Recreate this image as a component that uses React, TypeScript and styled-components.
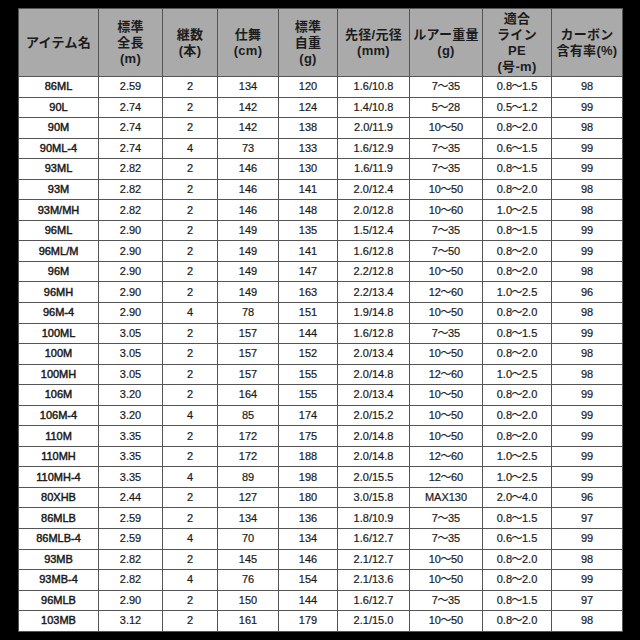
import React from 'react';
import styled, { createGlobalStyle } from 'styled-components';

const GlobalStyle = createGlobalStyle`
  html, body {
    margin: 0;
    padding: 0;
    background: #000;
  }
  body {
    font-family: "Liberation Sans", "Noto Sans CJK JP", sans-serif;
  }
`;

const Frame = styled.div`
  width: 640px;
  height: 640px;
  box-sizing: border-box;
  padding: 8px 18px 9px 18px;
  background: #000;
`;

const SpecTable = styled.table`
  width: 604px;
  height: 623px;
  table-layout: fixed;
  border-collapse: collapse;
  background: #fff;
`;

const HeadRow = styled.tr`
  height: 68px;
`;

const HeadCell = styled.th`
  background: #aaaaaa;
  border: 1px solid #555;
  padding: 0;
  font-family: "Liberation Sans", "Noto Sans CJK JP", sans-serif;
  font-size: 13px;
  font-weight: 700;
  line-height: 16px;
  color: #1c1c1c;
  text-align: center;
  vertical-align: middle;
  white-space: nowrap;
  letter-spacing: 0.3px;
`;

const BodyRow = styled.tr`
  height: 20.56px;
`;

const Cell = styled.td<{ $name?: boolean }>`
  border: 1px solid #555;
  padding: 0;
  font-size: 11px;
  line-height: 13px;
  font-weight: 400;
  color: #1a1a1a;
  -webkit-text-stroke: ${(p) => (p.$name ? '0.45px' : '0.2px')} #1a1a1a;
  text-align: center;
  vertical-align: middle;
  white-space: nowrap;
`;

const Wave = styled.span`
  font-family: "Noto Sans CJK JP", sans-serif;
  font-size: 11px;
  line-height: 0;
  margin: 0 -0.5px;
`;

const widths = [80, 64, 55, 61, 59, 72, 73, 69, 71];

const headers: string[][] = [
  ['アイテム名'],
  ['標準', '全長', '(m)'],
  ['継数', '(本)'],
  ['仕舞', '(cm)'],
  ['標準', '自重', '(g)'],
  ['先径/元径', '(mm)'],
  ['ルアー重量', '(g)'],
  ['適合', 'ライン', 'PE', '(号-m)'],
  ['カーボン', '含有率(%)'],
];

const rows: string[][] = [
  ['86ML', '2.59', '2', '134', '120', '1.6/10.8', '7~35', '0.8~1.5', '98'],
  ['90L', '2.74', '2', '142', '124', '1.4/10.8', '5~28', '0.5~1.2', '99'],
  ['90M', '2.74', '2', '142', '138', '2.0/11.9', '10~50', '0.8~2.0', '98'],
  ['90ML-4', '2.74', '4', '73', '133', '1.6/12.9', '7~35', '0.6~1.5', '99'],
  ['93ML', '2.82', '2', '146', '130', '1.6/11.9', '7~35', '0.8~1.5', '99'],
  ['93M', '2.82', '2', '146', '141', '2.0/12.4', '10~50', '0.8~2.0', '98'],
  ['93M/MH', '2.82', '2', '146', '148', '2.0/12.8', '10~60', '1.0~2.5', '98'],
  ['96ML', '2.90', '2', '149', '135', '1.5/12.4', '7~35', '0.8~1.5', '99'],
  ['96ML/M', '2.90', '2', '149', '141', '1.6/12.8', '7~50', '0.8~2.0', '99'],
  ['96M', '2.90', '2', '149', '147', '2.2/12.8', '10~50', '0.8~2.0', '98'],
  ['96MH', '2.90', '2', '149', '163', '2.2/13.4', '12~60', '1.0~2.5', '96'],
  ['96M-4', '2.90', '4', '78', '151', '1.9/14.8', '10~50', '0.8~2.0', '98'],
  ['100ML', '3.05', '2', '157', '144', '1.6/12.8', '7~35', '0.8~1.5', '99'],
  ['100M', '3.05', '2', '157', '152', '2.0/13.4', '10~50', '0.8~2.0', '98'],
  ['100MH', '3.05', '2', '157', '155', '2.0/14.8', '12~60', '1.0~2.5', '98'],
  ['106M', '3.20', '2', '164', '155', '2.0/13.4', '10~50', '0.8~2.0', '99'],
  ['106M-4', '3.20', '4', '85', '174', '2.0/15.2', '10~50', '0.8~2.0', '99'],
  ['110M', '3.35', '2', '172', '175', '2.0/14.8', '10~50', '0.8~2.0', '99'],
  ['110MH', '3.35', '2', '172', '188', '2.0/14.8', '12~60', '1.0~2.5', '99'],
  ['110MH-4', '3.35', '4', '89', '198', '2.0/15.5', '12~60', '1.0~2.5', '99'],
  ['80XHB', '2.44', '2', '127', '180', '3.0/15.8', 'MAX130', '2.0~4.0', '96'],
  ['86MLB', '2.59', '2', '134', '136', '1.8/10.9', '7~35', '0.8~1.5', '97'],
  ['86MLB-4', '2.59', '4', '70', '134', '1.6/12.7', '7~35', '0.6~1.5', '99'],
  ['93MB', '2.82', '2', '145', '146', '2.1/12.7', '10~50', '0.8~2.0', '98'],
  ['93MB-4', '2.82', '4', '76', '154', '2.1/13.6', '10~50', '0.8~2.0', '99'],
  ['96MLB', '2.90', '2', '150', '144', '1.6/12.7', '7~35', '0.8~1.5', '97'],
  ['103MB', '3.12', '2', '161', '179', '2.1/15.0', '10~50', '0.8~2.0', '98'],
];

// ranges are written "a~b" in data, shown with a wide wave dash
const renderValue = (v: string) => {
  const parts = v.split('~');
  if (parts.length < 2) return v;
  return (
    <>
      {parts[0]}
      <Wave>〜</Wave>
      {parts[1]}
    </>
  );
};

export default function App() {
  return (
    <>
      <GlobalStyle />
      <Frame>
        <SpecTable>
          <colgroup>
            {widths.map((w, i) => (
              <col key={i} style={{ width: w }} />
            ))}
          </colgroup>
          <thead>
            <HeadRow>
              {headers.map((lines, i) => (
                <HeadCell key={i}>
                  {lines.map((l, j) => (
                    <div key={j}>{l}</div>
                  ))}
                </HeadCell>
              ))}
            </HeadRow>
          </thead>
          <tbody>
            {rows.map((r) => (
              <BodyRow key={r[0]}>
                {r.map((v, i) => (
                  <Cell key={i} $name={i === 0}>
                    {renderValue(v)}
                  </Cell>
                ))}
              </BodyRow>
            ))}
          </tbody>
        </SpecTable>
      </Frame>
    </>
  );
}
